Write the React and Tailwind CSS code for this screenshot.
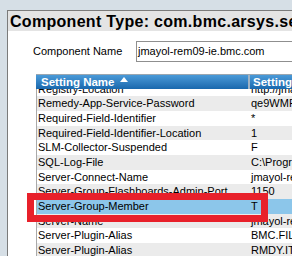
const rows = [
  { name: "Registry-Location", value: "http://jmayol" },
  { name: "Remedy-App-Service-Password", value: "qe9WMFx" },
  { name: "Required-Field-Identifier", value: "*" },
  { name: "Required-Field-Identifier-Location", value: "1" },
  { name: "SLM-Collector-Suspended", value: "F" },
  { name: "SQL-Log-File", value: "C:\\Program Files" },
  { name: "Server-Connect-Name", value: "jmayol-rem09" },
  { name: "Server-Group-Flashboards-Admin-Port", value: "1150" },
  { name: "Server-Group-Member", value: "T", selected: true },
  { name: "Server-Name", value: "jmayol-rem09" },
  { name: "Server-Plugin-Alias", value: "BMC.FILTER" },
  { name: "Server-Plugin-Alias", value: "RMDY.ITSM" },
];

const App = () => {
  return (
    <div
      className="relative w-[292px] h-[256px] overflow-hidden bg-[#d6dfe6] pl-[7px] pt-[10px]"
      style={{ fontFamily: '"Liberation Sans", Arial, sans-serif' }}
    >
      <div className="h-full w-[400px] border-l border-t border-[#7b7b7b] bg-white flex flex-col">
        <div className="h-[20px] bg-[#e4e4e4] pl-[2px] text-[16px] tracking-[0.3px] leading-[21px] font-bold text-black whitespace-nowrap overflow-hidden">
          Component Type: com.bmc.arsys.server
        </div>

        <div className="flex items-center mt-[10px] h-[21px]">
          <span className="ml-[25px] w-[103px] text-[11px] text-black">Component Name</span>
          <div className="h-[21px] w-[200px] border border-[#8f8f8f] bg-white pl-[1px] text-[11px] leading-[19px] text-black whitespace-nowrap">
            jmayol-rem09-ie.bmc.com
          </div>
        </div>

        <div className="ml-[28px] mt-[12px] flex flex-col flex-1 min-h-0">
          <div className="flex h-[15px] border-t border-[#9aa6b0] bg-gradient-to-b from-[#4a9ad8] to-[#1868ad] text-white font-bold text-[11.5px] leading-[14px]">
            <div className="w-[214px] flex items-center pl-[5px] border-r-2 border-[#9fb2c3]">
              Setting Name
              <svg width="8" height="5" viewBox="0 0 8 5" className="ml-[5px] mb-[6px]">
                <path d="M0 5 L4 0 L8 5 Z" fill="#ffffff" />
              </svg>
            </div>
            <div className="pl-[3px] flex items-center">Setting Value</div>
          </div>

          <div className="flex-1 min-h-0 overflow-hidden border-l border-[#a9a9a9]">
            <div className="-mt-[7.3px]">
              {rows.map((r, i) => (
                <div
                  key={i}
                  className={`flex h-[14.67px] text-[11px] leading-[14.67px] text-black whitespace-nowrap ${
                    r.selected ? "bg-[#8cc6ea]" : i % 2 === 0 ? "bg-white" : "bg-[#ebebeb]"
                  }`}
                >
                  <div className="w-[213px] pl-[1px] overflow-hidden">{r.name}</div>
                  <div className="pl-[1px]">{r.value}</div>
                </div>
              ))}
            </div>
          </div>
        </div>
      </div>

      <div className="absolute left-[27px] top-[193px] w-[241px] h-[29px] border-[7px] border-[#e8202a]" />
    </div>
  );
};

export default App;
